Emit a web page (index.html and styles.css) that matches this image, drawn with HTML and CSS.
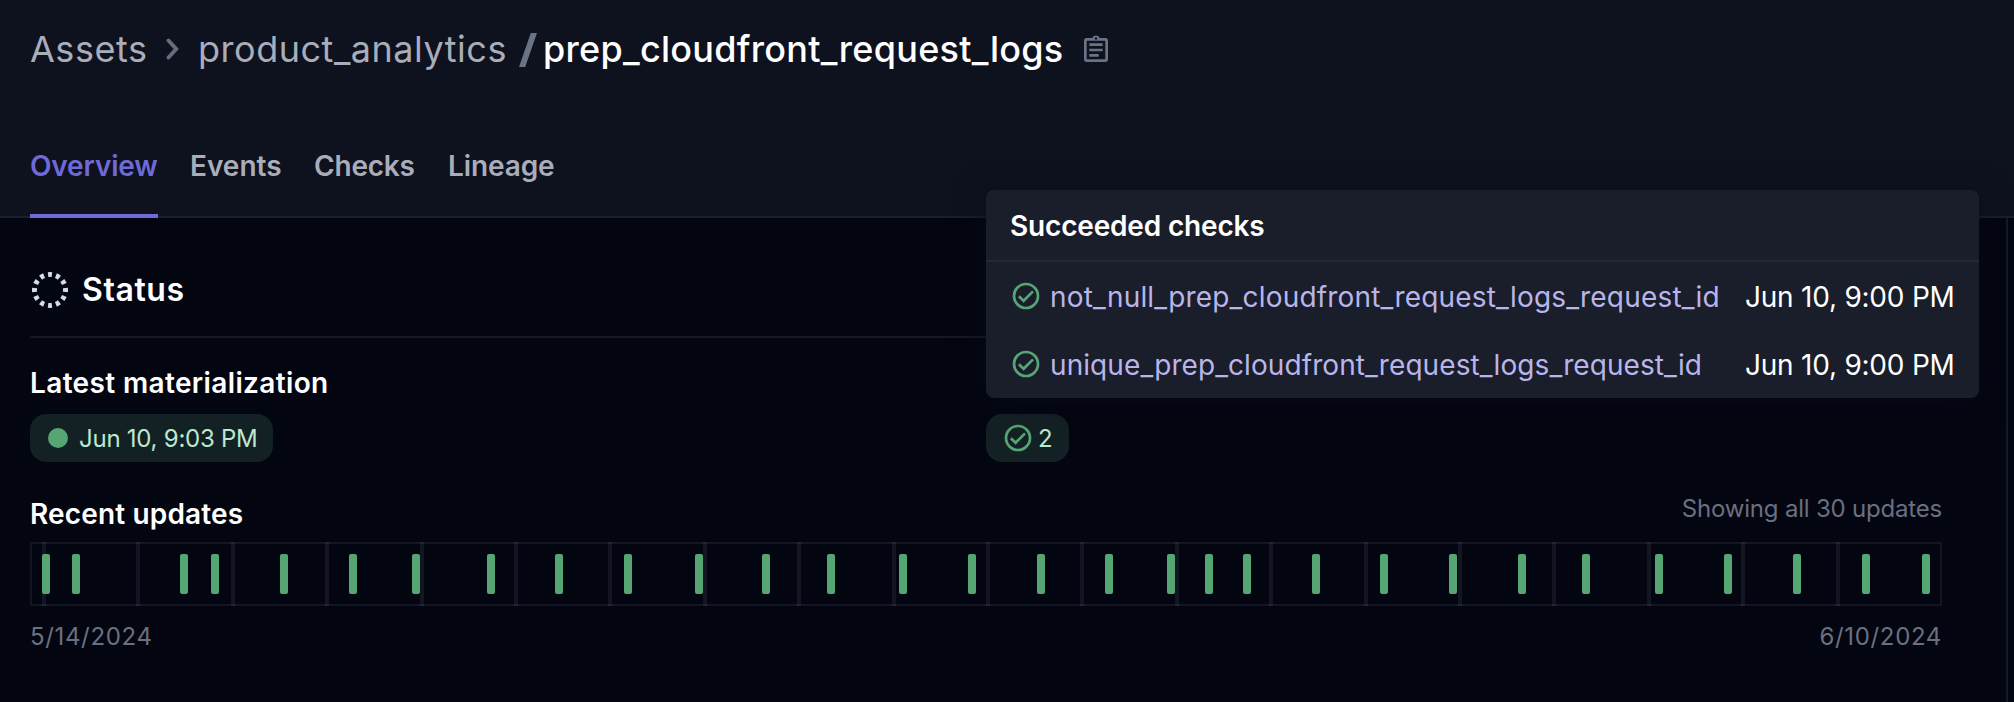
FILE: index.html
```html
<!DOCTYPE html>
<html lang="en">
<head>
<meta charset="utf-8">
<title>prep_cloudfront_request_logs</title>
<link rel="stylesheet" href="styles.css">
</head>
<body>
<svg class="defs" width="0" height="0">
  <symbol id="check" viewBox="0 0 28 28">
    <circle cx="14" cy="14" r="12" fill="none" stroke="currentColor" stroke-width="2.7"/>
    <path d="M6.900 14.200 11.600 18.800 21 9.400" fill="none" stroke="currentColor" stroke-width="2.700"/>
  </symbol>
</svg>
<header class="header">
  <nav class="crumbs">
    <a class="crumb assets">Assets</a>
    <svg class="chevron" viewBox="0 0 14 22"><path d="M2.500 2.500 10.200 11 2.500 19.500" fill="none" stroke="currentColor" stroke-width="3.900" stroke-linecap="round" stroke-linejoin="miter"/></svg>
    <a class="crumb group">product_analytics</a>
    <svg class="slash" viewBox="0 0 18 34"><path d="M0 34 11.800 0H18L6.200 34Z" fill="currentColor"/></svg>
    <h1 class="crumb current">prep_cloudfront_request_logs</h1>
    <svg class="clipboard" viewBox="0 0 24 28"><path fill="currentColor" fill-rule="evenodd" d="M2.700 3H8.300A4 4 0 0 1 15.700 3H21.300A2.700 2.700 0 0 1 24 5.700V24.300A2.700 2.700 0 0 1 21.300 27H2.700A2.700 2.700 0 0 1 0 24.300V5.700A2.700 2.700 0 0 1 2.700 3ZM2.700 5.700V24.300H21.300V5.700ZM12 2.300A1.200 1.200 0 1 0 12 4.700 1.200 1.200 0 1 0 12 2.300ZM5.300 8.300H18.700V11H5.300ZM5.300 13.700H18.700V16.300H5.300ZM5.300 19H14.700V21.700H5.300Z"/></svg>
  </nav>
  <nav class="tabs">
    <a class="tab active">Overview</a>
    <a class="tab events">Events</a>
    <a class="tab checks">Checks</a>
    <a class="tab lineage">Lineage</a>
  </nav>
</header>
<main class="body">
  <section class="panel">
    <div class="status">
      <svg class="ring" viewBox="0 0 36 36"><circle cx="18" cy="18" r="15.500" fill="none" stroke="currentColor" stroke-width="5" pathLength="120" stroke-dasharray="5 5" stroke-dashoffset="2.500"/></svg>
      <h2>Status</h2>
    </div>
    <div class="facts">
      <div class="fact">
        <h3 class="latest">Latest materialization</h3>
        <span class="tag"><i class="dot"></i><span class="when">Jun 10, 9:03 PM</span></span>
      </div>
      <div class="fact">
        <span class="tag count"><svg class="icon"><use href="#check"/></svg><span>2</span></span>
        <div class="popover">
          <h3 class="popover-title">Succeeded checks</h3>
          <div class="check-row"><svg class="icon"><use href="#check"/></svg><a class="link first">not_null_prep_cloudfront_request_logs_request_id</a><time>Jun 10, 9:00 PM</time></div>
          <div class="check-row"><svg class="icon"><use href="#check"/></svg><a class="link">unique_prep_cloudfront_request_logs_request_id</a><time>Jun 10, 9:00 PM</time></div>
        </div>
      </div>
    </div>
    <div class="updates-head">
      <h3 class="recent">Recent updates</h3>
      <span class="muted showing">Showing all 30 updates</span>
    </div>
    <svg class="timeline" viewBox="30 542 1912 64">
      <rect class="frame" x="31" y="543" width="1910" height="62"/>
      <path class="grid" d="M44 542v64M138 542v64M233 542v64M327 542v64M422 542v64M516 542v64M610 542v64M705 542v64M799 542v64M894 542v64M988 542v64M1082 542v64M1177 542v64M1271 542v64M1366 542v64M1460 542v64M1554 542v64M1649 542v64M1743 542v64M1838 542v64"/>
      <g class="bars" id="bars"></g>
    </svg>
    <div class="dates muted"><span class="from">5/14/2024</span><span class="to">6/10/2024</span></div>
  </section>
</main>
<script src="timeline.js"></script>
</body>
</html>
```
FILE: timeline.js
```js
// Horizontal position of every materialization on the timeline.
const updates = [42, 72, 180, 211, 280, 349, 412, 487, 555, 624, 695, 762, 827, 899, 968,
  1037, 1105, 1167, 1205, 1243, 1312, 1380, 1449, 1518, 1582, 1655, 1724, 1793, 1862, 1922];
const bars = document.getElementById('bars');
for (const x of updates) {
  const bar = document.createElementNS('http://www.w3.org/2000/svg', 'rect');
  bar.setAttribute('x', x);
  bar.setAttribute('y', 554);
  bar.setAttribute('width', 8);
  bar.setAttribute('height', 40);
  bar.setAttribute('rx', 2);
  bars.append(bar);
}
```
FILE: styles.css
```css
* { box-sizing: border-box; margin: 0; padding: 0; }
html, body { height: 100%; }
body {
  display: flex;
  flex-direction: column;
  background: #030510;
  color: #fff;
  font-family: Inter, "Liberation Sans", sans-serif;
  font-size: 28px;
  overflow: hidden;
  white-space: nowrap;
}
svg { display: block; flex: none; }
.defs { position: absolute; }
h3 { font-size: 28px; line-height: 34px; font-weight: 600; }

.header {
  flex: none;
  height: 218px;
  padding: 0 30px;
  background: #0e111e;
  box-shadow: inset 0 -2px #1b1e2b;
}
.crumbs { display: flex; align-items: center; height: 97px; color: #a9adb9; }
.crumb { font-size: 36px; line-height: 44px; }
.assets { letter-spacing: .53px; width: 136px; }
.chevron { width: 14px; height: 22px; margin-top: 1px; color: #656c7d; }
.group { letter-spacing: .52px; margin-left: 18px; width: 321px; }
.slash { width: 18px; height: 34px; margin-top: 3px; color: #6a7286; }
.current { margin-left: 6px; width: 541px; font-weight: 500; letter-spacing: .27px; color: #fff; }
.clipboard { width: 24px; height: 28px; color: #6a7286; }

.tabs { display: flex; gap: 32px; height: 100px; margin-top: 21px; color: #a9adb9; }
.tab { font-weight: 600; line-height: 97px; height: 100px; border-bottom: 4px solid transparent; }
.tab.active { width: 128px; letter-spacing: -.16px; color: #7069d8; border-color: #7069d8; }
.events { width: 92px; }
.checks { width: 102px; letter-spacing: -.2px; }
.lineage { letter-spacing: -.1px; }

.body { flex: 1; display: flex; }
.panel { width: 2008px; padding: 0 64px 0 30px; border-right: 2px solid #151826; }
.status { display: flex; align-items: center; gap: 14px; height: 120px; padding: 26px 0 0 2px; border-bottom: 2px solid #151824; }
.status h2 { font-size: 32px; line-height: 40px; font-weight: 600; letter-spacing: .6px; }
.ring { width: 36px; height: 36px; color: #d7daea; }

.facts { display: grid; grid-template-columns: 1fr 1fr; height: 124px; padding-top: 28px; }
.fact { position: relative; display: flex; flex-direction: column; align-items: flex-start; justify-content: flex-end; gap: 14px; }
.latest { letter-spacing: .36px; }
.tag { display: flex; align-items: center; height: 48px; padding: 0 16px 0 18px; border-radius: 16px; background: #142124; color: #bde8d0; font-size: 24px; }
.dot { width: 20px; height: 20px; margin-right: 11px; border-radius: 50%; background: #56a575; }
.when { width: 178px; letter-spacing: -.25px; }
.icon { width: 28px; height: 28px; color: #56a575; }
.count span { width: 14px; margin-left: 6px; }
.count { width: 83px; }

.popover {
  position: absolute;
  left: 0;
  bottom: 64px;
  width: 993px;
  height: 208px;
  border-radius: 8px;
  background: #1a1d2a;
  box-shadow: 0 4px 32px rgba(10, 13, 30, .6);
}
.popover-title { height: 72px; padding-left: 24px; line-height: 73px; letter-spacing: -.17px; border-bottom: 2px solid #242735; }
.check-row { display: flex; align-items: center; height: 68px; padding: 0 24px 0 26px; }
.link { flex: 1; margin-left: 10px; padding-top: 1px; letter-spacing: .08px; color: #b9b5ea; }
.link.first { letter-spacing: .18px; }
.check-row time { width: 210px; padding-top: 1px; letter-spacing: -.23px; }

.updates-head { display: flex; justify-content: space-between; align-items: flex-start; height: 80px; padding-top: 35px; }
.recent { letter-spacing: .16px; }
.muted { color: #6a7080; font-size: 24px; }
.showing { line-height: 23px; letter-spacing: -.2px; }
.timeline { width: 1912px; height: 64px; }
.frame { fill: none; stroke: #131622; stroke-width: 2; }
.grid { stroke: #d4dcff; stroke-opacity: .08; stroke-width: 4; }
.bars { fill: #56a575; }
.dates { display: flex; justify-content: space-between; margin-top: 16px; line-height: 29px; letter-spacing: .65px; }
```
